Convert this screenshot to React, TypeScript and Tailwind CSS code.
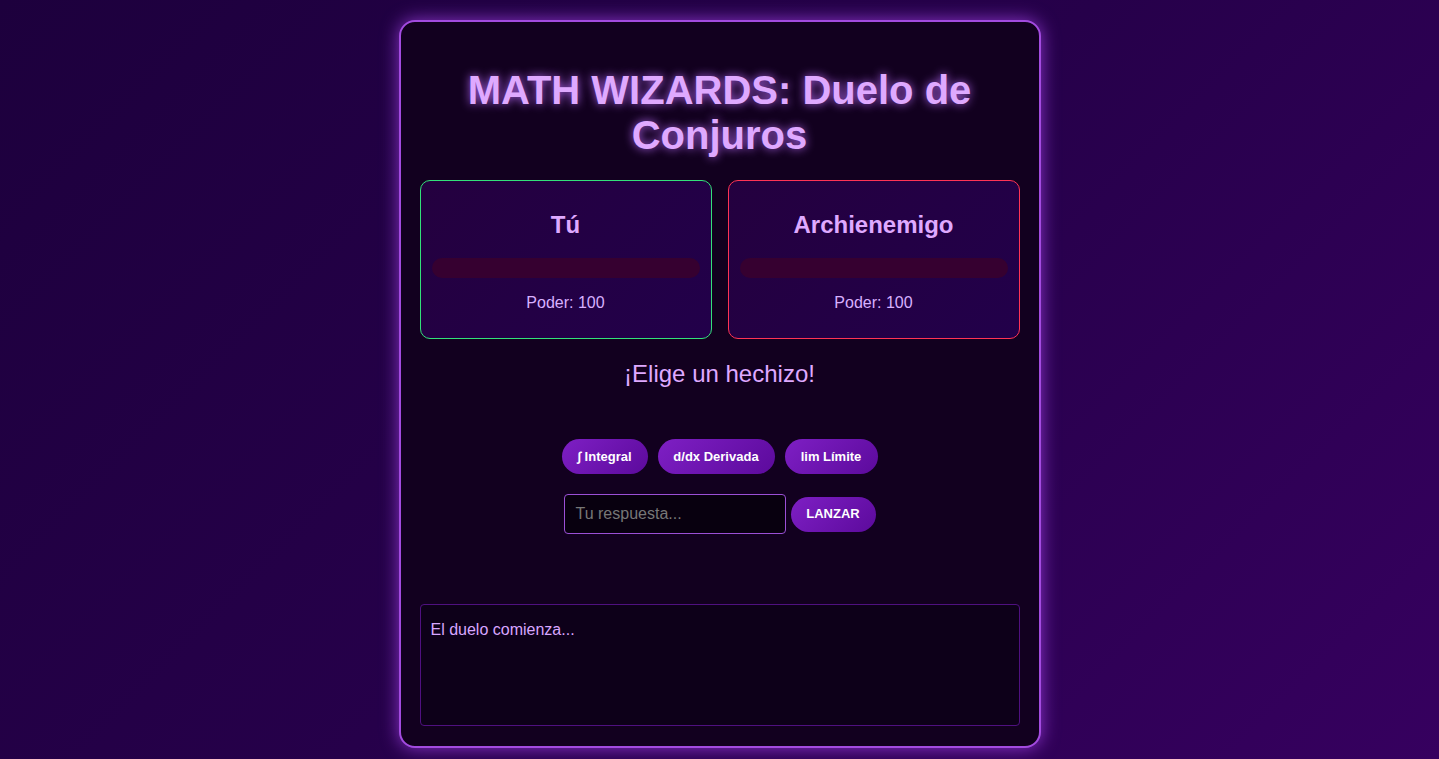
import React from "react";

export default function App() {
  const font = { fontFamily: '"Liberation Sans", Arial, sans-serif' };
  return (
    <div
      className="w-full h-[759px] overflow-hidden bg-[linear-gradient(135deg,#1d003d_0%,#26004a_50%,#36005f_100%)] flex justify-center"
      style={font}
    >
      <div className="mt-[20px] w-[642px] h-[728px] shrink-0 rounded-[16px] border-2 border-[#a34be0] bg-[#12001f] shadow-[0_0_18px_rgba(170,70,240,0.75)] px-[19px] pt-[19px] pb-[19px] flex flex-col">
        <h1 className="mt-[27px] text-center text-[40px] leading-[45px] font-bold text-[#dfa9ff] [text-shadow:0_0_10px_rgba(190,110,255,0.9)]">
          MATH WIZARDS: Duelo de
          <br />
          Conjuros
        </h1>
        <div className="mt-[22px] flex gap-[16px]">
          <Card name="Tú" border="border-[#33e07a]" />
          <Card name="Archienemigo" border="border-[#ff3355]" />
        </div>
        <div className="mt-[21px] text-center text-[24px] leading-[28px] text-[#dfa9ff]">
          ¡Elige un hechizo!
        </div>
        <div className="mt-[51px] flex justify-center gap-[10px]">
          <SpellBtn label="∫ Integral" w="w-[86px]" />
          <SpellBtn label="d/dx Derivada" w="w-[117px]" />
          <SpellBtn label="lim Límite" w="w-[93px]" />
        </div>
        <div className="mt-[20px] flex justify-center items-center gap-[5px]">
          <div className="w-[222px] h-[40px] rounded-[4px] border border-[#9b4fd6] bg-[#08000f] flex items-center px-[11px] text-[16px] text-[#777777]">
            Tu respuesta...
          </div>
          <button className="w-[85px] h-[35px] rounded-full bg-[linear-gradient(135deg,#7e1fc4,#5c0a9c)] text-white text-[13px] font-bold">
            LANZAR
          </button>
        </div>
        <div className="mt-[70px] h-[122px] rounded-[4px] border border-[#4f1080] bg-[#0d0019] px-[10px] pt-[16px] text-[16px] leading-[18px] text-[#d8a6ff]">
          El duelo comienza...
        </div>
      </div>
    </div>
  );
}

function Card({ name, border }: { name: string; border: string }) {
  return (
    <div
      className={`flex-1 h-[159px] rounded-[10px] border ${border} bg-[linear-gradient(135deg,#24003f,#22004a)] px-[11px] flex flex-col`}
    >
      <div className="mt-[30px] text-center text-[24px] leading-[28px] font-bold text-[#dfa9ff]">
        {name}
      </div>
      <div className="mt-[19px] h-[20px] rounded-full bg-[#360030]" />
      <div className="mt-[16px] text-center text-[16px] leading-[18px] text-[#d8b0ff]">
        Poder: 100
      </div>
    </div>
  );
}

function SpellBtn({ label, w }: { label: string; w: string }) {
  return (
    <button
      className={`${w} h-[35px] rounded-full bg-[linear-gradient(135deg,#7e1fc4,#5c0a9c)] text-white text-[13px] font-bold flex items-center justify-center`}
    >
      {label}
    </button>
  );
}
